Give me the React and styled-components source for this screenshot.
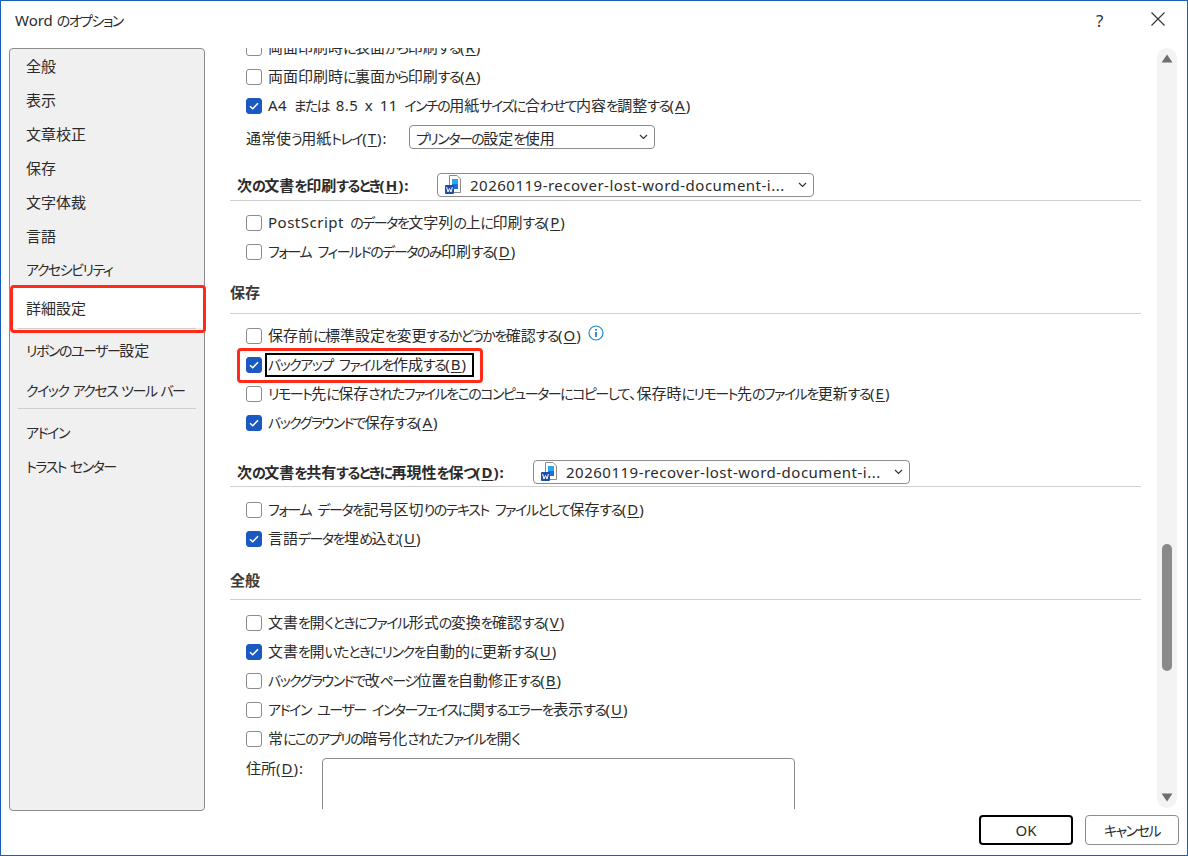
import React from "react";
import styled, { createGlobalStyle } from "styled-components";

const Global = createGlobalStyle`
  html, body { margin: 0; padding: 0; background: #fff; }
  body {
    font-family: "Noto Sans", "Noto Sans CJK JP", sans-serif;
    font-size: 15px;
    color: #2b2b2b;
    font-feature-settings: "palt";
  }
  * { box-sizing: border-box; }
`;

const Dialog = styled.div`
  width: 1188px; height: 856px; border: 1px solid #1b5fb5;
  display: flex; flex-direction: column; background: #fff; overflow: hidden;
`;
const TitleBar = styled.div`
  height: 47px; flex: none; display: flex; align-items: center; padding: 0 14px 9px 14px;
`;
const Title = styled.div` flex: 1; font-size: 15px; `;
const Help = styled.div` width: 54px; font-size: 17px; color: #333; text-align: left; `;
const Body = styled.div`
  flex: 1; min-height: 0; display: flex; padding: 0 9px 0 8px;
`;
const Side = styled.nav`
  position: relative; width: 196px; flex: none; background: #f0f0f0; border: 1px solid #8c8c8c; border-radius: 4px;
  margin-right: 25px; height: 763px; white-space: nowrap;
`;
const NavItem = styled.div`
  height: ${p => p.$h || 34}px; margin-top: ${p => p.$mt || 0}px; padding: 0 0 ${p => (p.$active ? 0 : 2)}px 16px;
  display: flex; align-items: center;
  background: ${p => (p.$active ? "#fff" : "transparent")};
`;
const NavRule = styled.div` height: 1px; background: #cfcfcf; margin: 0 8px; `;
const RedBox = styled.div`
  position: absolute; border: 3px solid #ff2a17; border-radius: 4px; pointer-events: none;
`;
const NavRed = styled(RedBox)` left: 0; top: 236px; width: 196px; height: 48px; `;
const Pane = styled.div`
  position: relative; flex: 1; min-width: 0; height: 762px; overflow: hidden; display: flex;
`;
const Scroll = styled.div`
  width: 911px; flex: none; overflow: hidden; height: 761px;
`;
const Inner = styled.div` margin-top: -15px; `;
const Row = styled.div`
  height: 29px; display: flex; align-items: center; padding-left: 16px; white-space: nowrap; position: relative;
`;
const Box = styled.span`
  width: 16px; height: 16px; flex: none; border-radius: 3px; margin-right: 6px;
  border: 1px solid ${p => (p.$on ? "#1a5ac0" : "#8c8c8c")};
  background: ${p => (p.$on ? "#1a5ac0" : "#fff")};
  display: flex; align-items: center; justify-content: center;
`;
const Label = styled.span`
  word-spacing: 2.5px;
  margin-bottom: 2px;
  ${p => p.$focus && `outline: 2px solid #000; padding: 0 5px 0 1px; margin: 0 0 0 -1px; height: 20px; line-height: 19px;`}
`;
const Kana = styled.span` font-size: 14px; letter-spacing: -1.5px; `;
const Latin = styled.span` letter-spacing: 0.5px; `;
const Accel = styled.span` letter-spacing: 1px; `;
const Key = styled.u` text-underline-offset: 2px; `;
const Section = styled.div`
  margin-top: 12px; height: ${p => p.$h}px; border-bottom: 1px solid #d0d0d0; font-weight: 700; font-size: 15px;
  display: flex; align-items: flex-start; color: #3a3a3a; margin-bottom: ${p => 43 - p.$h}px; line-height: 20px; padding-top: ${p => p.$pt}px;
`;
const SubHead = styled.div`
  margin-top: ${p => p.$mt}px; height: ${p => p.$h}px; border-bottom: 1px solid #d0d0d0; margin-bottom: ${p => 37 - p.$h}px;
  display: flex; align-items: flex-start; padding-left: 7px; font-weight: 700; color: #2b2b2b; white-space: nowrap; padding-top: 2px;
`;
const SubText = styled.span` line-height: 24px; width: ${p => p.$w}px; flex: none; `;
const Select = styled.div`
  width: ${p => p.$w}px; height: 24px; border: 1px solid #8c8c8c; border-radius: 4px; display: flex; align-items: center;
  padding: 0 6px; font-weight: 400; background: #fff; flex: none;
`;
const SelectText = styled.span`
  flex: 1; min-width: 0; overflow: hidden; white-space: nowrap; letter-spacing: ${p => (p.$doc ? "0.5px" : "0")};
`;
const TrayRow = styled(Row)` height: 34px; `;
const TrayLabel = styled.span` width: 163px; flex: none; `;
const AddrRow = styled.div`
  padding: 5px 0 0 16px; display: flex; align-items: flex-start;
`;
const AddrLabel = styled.div` width: 76px; flex: none; line-height: 20px; `;
const TextArea = styled.div`
  width: 473px; height: 90px; border: 1px solid #8c8c8c; border-radius: 4px; flex: none;
`;
const Rail = styled.div`
  width: 20px; flex: none; margin-left: 16px; height: 760px; background: #f3f3f3; border-radius: 10px; position: relative;
  display: flex; flex-direction: column; align-items: center; justify-content: space-between; padding: 6px 0;
`;
const Thumb = styled.div`
  position: absolute; left: 5px; top: 496px; width: 10px; height: 127px; background: #8a8a8a; border-radius: 5px;
`;
const Footer = styled.div`
  flex: none; height: 45px; display: flex; justify-content: flex-end; gap: 12px; padding: 5px 8px 0 0;
`;
const Btn = styled.div`
  width: 94px; height: 30px; border-radius: 4px; display: flex; align-items: center; justify-content: center; background: #fff;
  border: ${p => (p.$primary ? "2px solid #000" : "1px solid #8c8c8c")};
`;
const Info = styled.svg` margin-left: 6px; position: relative; top: -3px; flex: none; `;
const RowRed = styled(RedBox)` left: 7px; top: 300px; width: 246px; height: 35px; `;
const CloseIcon = styled.svg` margin-right: 7px; margin-top: -2px; flex: none; `;
const DocIcon = styled.svg` margin-right: 8px; flex: none; `;

const KANA = /([\u3041-\u30ff]+)/;
const J = ({ children }) =>
  String(children).split(KANA).map((part, i) => (i % 2 ? <Kana key={i}>{part}</Kana> : part));
const RUNS = /([\u3041-\u30ff]+|[A-Za-z0-9.]+)/;
const Mixed = ({ children }) =>
  String(children).split(RUNS).map((part, i) => {
    if (i % 2 === 0) return part;
    return KANA.test(part) ? <Kana key={i}>{part}</Kana> : <Latin key={i}>{part}</Latin>;
  });

const Check = () => (
  <svg width="10" height="8" viewBox="0 0 10 8"><path d="M1 4.2 3.7 6.8 9 1.2" fill="none" stroke="#fff" strokeWidth="1.5" /></svg>
);
const Chevron = () => (
  <svg width="9" height="6" viewBox="0 0 9 6"><path d="M1 1 4.5 4.5 8 1" fill="none" stroke="#333" strokeWidth="1.2" /></svg>
);
const WordIcon = () => (
  <DocIcon width="18" height="20" viewBox="0 0 18 20">
    <path d="M5.5 .5H13L16.5 4V17.5H5.5Z" fill="#fff" stroke="#8a8a8a" />
    <rect x="8" y="4" width="6" height="5" fill="#2aa7ee" />
    <rect x="8" y="9" width="6" height="5" fill="#1f6fd6" />
    <rect x="1" y="10" width="9" height="9" rx="1" fill="#1b4fa8" />
    <path d="M2.6 12 4 17 5.5 13.5 7 17 8.4 12" fill="none" stroke="#fff" strokeWidth="1" />
  </DocIcon>
);
const Acc = ({ k, tail = ")" }) => <Accel>(<Key>{k}</Key>{tail}</Accel>;

const Opt = ({ on, k, pre, focus, children }) => (
  <Row>
    <Box $on={on}>{on && <Check />}</Box>
    <Label $focus={focus}>
      <Mixed>{pre}</Mixed>
      {k && <Acc k={k} />}
    </Label>
    {children}
  </Row>
);

const DOC = "20260119-recover-lost-word-document-i...";

export default function App() {
  return (
    <Dialog>
      <Global />
      <TitleBar>
        <Title><J>Word のオプション</J></Title>
        <Help>?</Help>
        <CloseIcon width="16" height="16" viewBox="0 0 16 16">
          <path d="M1.5 1.5 14.5 14.5M14.5 1.5 1.5 14.5" stroke="#333" strokeWidth="1.1" />
        </CloseIcon>
      </TitleBar>
      <Body>
        <Side>
          {["全般", "表示", "文章校正", "保存", "文字体裁", "言語", "アクセシビリティ"].map(t => (
            <NavItem key={t}><span><J>{t}</J></span></NavItem>
          ))}
          <NavItem $active $h={41}>詳細設定</NavItem>
          <NavRule />
          <NavItem $mt={4}><span><J>リボンのユーザー設定</J></span></NavItem>
          <NavItem $mt={7}><span><J>クイック アクセス ツール バー</J></span></NavItem>
          <NavRule />
          <NavItem $mt={7}><span><J>アドイン</J></span></NavItem>
          <NavItem><span><J>トラスト センター</J></span></NavItem>
          <NavRed />
        </Side>
        <Pane>
          <Scroll>
            <Inner>
              <Opt pre="両面印刷時に表面から印刷する" k="R" />
              <Opt pre="両面印刷時に裏面から印刷する" k="A" />
              <Opt on pre="A4 または 8.5 x 11 インチの用紙サイズに合わせて内容を調整する" k="A" />
              <TrayRow>
                <TrayLabel><J>通常使う用紙トレイ</J><Acc k="T" tail="):" /></TrayLabel>
                <Select $w={246}>
                  <SelectText><J>プリンターの設定を使用</J></SelectText>
                  <Chevron />
                </Select>
              </TrayRow>
              <SubHead $mt={17} $h={30}>
                <SubText $w={200}><J>次の文書を印刷するとき</J><Acc k="H" tail="):" /></SubText>
                <Select $w={377}><WordIcon /><SelectText $doc>{DOC}</SelectText><Chevron /></Select>
              </SubHead>
              <Opt pre="PostScript のデータを文字列の上に印刷する" k="P" />
              <Opt pre="フォーム フィールドのデータのみ印刷する" k="D" />
              <Section $h={36} $pt={4}>保存</Section>
              <Opt pre="保存前に標準設定を変更するかどうかを確認する" k="O">
                <Info width="16" height="16" viewBox="0 0 16 16">
                  <circle cx="8" cy="8" r="7" fill="none" stroke="#1a8ad4" strokeWidth="1.2" />
                  <rect x="7.2" y="7" width="1.6" height="5" fill="#1a6fc0" />
                  <rect x="7.2" y="4" width="1.6" height="1.6" fill="#1a6fc0" />
                </Info>
              </Opt>
              <Opt on focus pre="バックアップ ファイルを作成する" k="B" />
              <Opt pre="リモート先に保存されたファイルをこのコンピューターにコピーして、保存時にリモート先のファイルを更新する" k="E" />
              <Opt on pre="バックグラウンドで保存する" k="A" />
              <SubHead $mt={21} $h={29}>
                <SubText $w={296}><J>次の文書を共有するときに再現性を保つ</J><Acc k="D" tail="):" /></SubText>
                <Select $w={377}><WordIcon /><SelectText $doc>{DOC}</SelectText><Chevron /></Select>
              </SubHead>
              <Opt pre="フォーム データを記号区切りのテキスト ファイルとして保存する" k="D" />
              <Opt on pre="言語データを埋め込む" k="U" />
              <Section $h={35} $pt={5}>全般</Section>
              <Opt pre="文書を開くときにファイル形式の変換を確認する" k="V" />
              <Opt on pre="文書を開いたときにリンクを自動的に更新する" k="U" />
              <Opt pre="バックグラウンドで改ページ位置を自動修正する" k="B" />
              <Opt pre="アドイン ユーザー インターフェイスに関するエラーを表示する" k="U" />
              <Opt pre="常にこのアプリの暗号化されたファイルを開く" />
              <AddrRow>
                <AddrLabel>住所<Acc k="D" tail="):" /></AddrLabel>
                <TextArea />
              </AddrRow>
            </Inner>
            <RowRed />
          </Scroll>
          <Rail>
            <svg width="12" height="9" viewBox="0 0 12 9"><path d="M6 .5 11.5 8.5H.5Z" fill="#6e6e6e" /></svg>
            <Thumb />
            <svg width="12" height="9" viewBox="0 0 12 9"><path d="M6 8.5 11.5 .5H.5Z" fill="#6e6e6e" /></svg>
          </Rail>
        </Pane>
      </Body>
      <Footer>
        <Btn $primary>OK</Btn>
        <Btn><J>キャンセル</J></Btn>
      </Footer>
    </Dialog>
  );
}
